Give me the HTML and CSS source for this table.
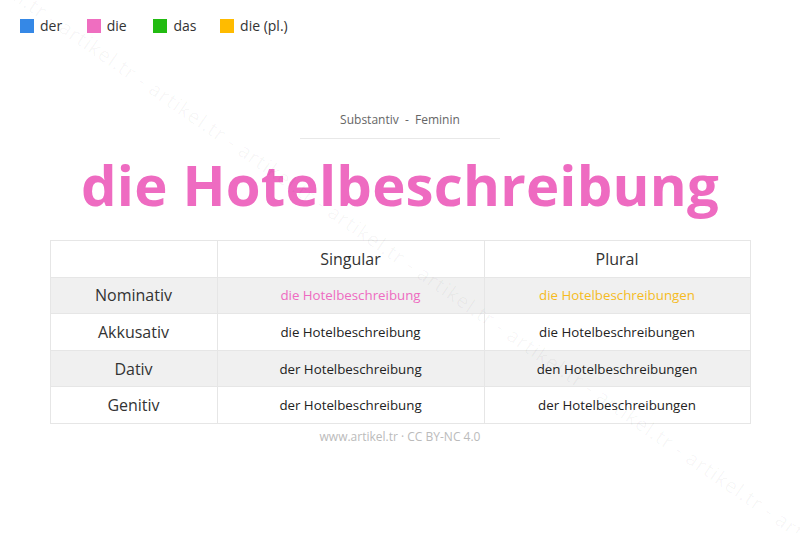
FILE: index.html
```html
<!DOCTYPE html>
<html lang="de">
<head>
<meta charset="utf-8">
<title>die Hotelbeschreibung</title>
<link rel="stylesheet" href="styles.css">
</head>
<body>
<div class="page">
  <div class="legend">
    <span class="item"><span class="sw der"></span>der</span>
    <span class="item"><span class="sw die"></span>die</span>
    <span class="item"><span class="sw das"></span>das</span>
    <span class="item"><span class="sw pl"></span>die (pl.)</span>
  </div>
  <div class="sub">Substantiv &nbsp;-&nbsp; Feminin</div>
  <h1 class="title">die Hotelbeschreibung</h1>
  <table class="decl">
    <thead>
      <tr><th></th><th>Singular</th><th>Plural</th></tr>
    </thead>
    <tbody>
      <tr class="alt"><td class="case">Nominativ</td><td class="fem">die Hotelbeschreibung</td><td class="plu">die Hotelbeschreibungen</td></tr>
      <tr><td class="case">Akkusativ</td><td>die Hotelbeschreibung</td><td>die Hotelbeschreibungen</td></tr>
      <tr class="alt"><td class="case">Dativ</td><td>der Hotelbeschreibung</td><td>den Hotelbeschreibungen</td></tr>
      <tr><td class="case">Genitiv</td><td>der Hotelbeschreibung</td><td>der Hotelbeschreibungen</td></tr>
    </tbody>
  </table>
  <div class="foot">www.artikel.tr · CC BY-NC 4.0</div>
  <div class="wm">artikel.tr - artikel.tr - artikel.tr - artikel.tr - artikel.tr - artikel.tr - artikel.tr - artikel.tr - artikel.tr - artikel.tr - artikel.tr - artikel.tr</div>
</div>
</body>
</html>
```

FILE: styles.css
```css
* { box-sizing: border-box; }
html, body { margin: 0; padding: 0; background: #fff; }
body { font-family: "Open Sans", "Noto Sans", sans-serif; color: #333; }
.page { position: relative; width: 800px; height: 533px; overflow: hidden; padding-top: 17px; }
.legend { display: flex; padding-left: 20px; font-size: 14px; line-height: 18px; color: #333; white-space: nowrap; }
.item { display: flex; align-items: center; width: 66.7px; flex: none; }
.item:last-child { width: auto; }
.sw { width: 14px; height: 14px; margin-right: 6px; display: inline-block; flex: none; }
.der { background: #3588e6; }
.die { background: #ef6ec0; }
.das { background: #22bb11; }
.pl { background: #ffbb00; }
.sub { width: 200px; margin: 76px auto 0; text-align: center; font-size: 12px; color: #666; line-height: 18px; padding-bottom: 9px; border-bottom: 1px solid #e8e8e8; }
.title { margin: 6px 0 0; text-align: center; font-size: 56.3px; line-height: 78px; font-weight: 700; color: #ee6bc1; letter-spacing: 0.2px; }
.decl { margin: 17px auto 0; width: 701px; border-collapse: collapse; table-layout: fixed; }
.decl th, .decl td { border: 1px solid #e6e6e6; text-align: center; height: 36.6px; padding: 0; }
.decl th { font-weight: 400; font-size: 16px; color: #333; line-height: 20px; }
.decl th:first-child { width: 167px; }
.decl th:nth-child(2) { width: 267px; }
.decl td { font-size: 13.3px; color: #222; }
.decl td.case { font-size: 16px; color: #333; }
.decl tr.alt td { background: #f0f0f0; }
.decl td.fem { color: #ee6bc1; }
.decl td.plu { color: #f5bb1e; }
.foot { text-align: center; font-size: 12px; color: #bbb; margin-top: 4px; line-height: 18px; }
.wm { position: absolute; left: -20px; top: -48px; transform-origin: 0 0; transform: rotate(34.5deg); white-space: nowrap; font-size: 20px; color: rgba(0,0,0,0.04); letter-spacing: 1px; pointer-events: none; }
```
